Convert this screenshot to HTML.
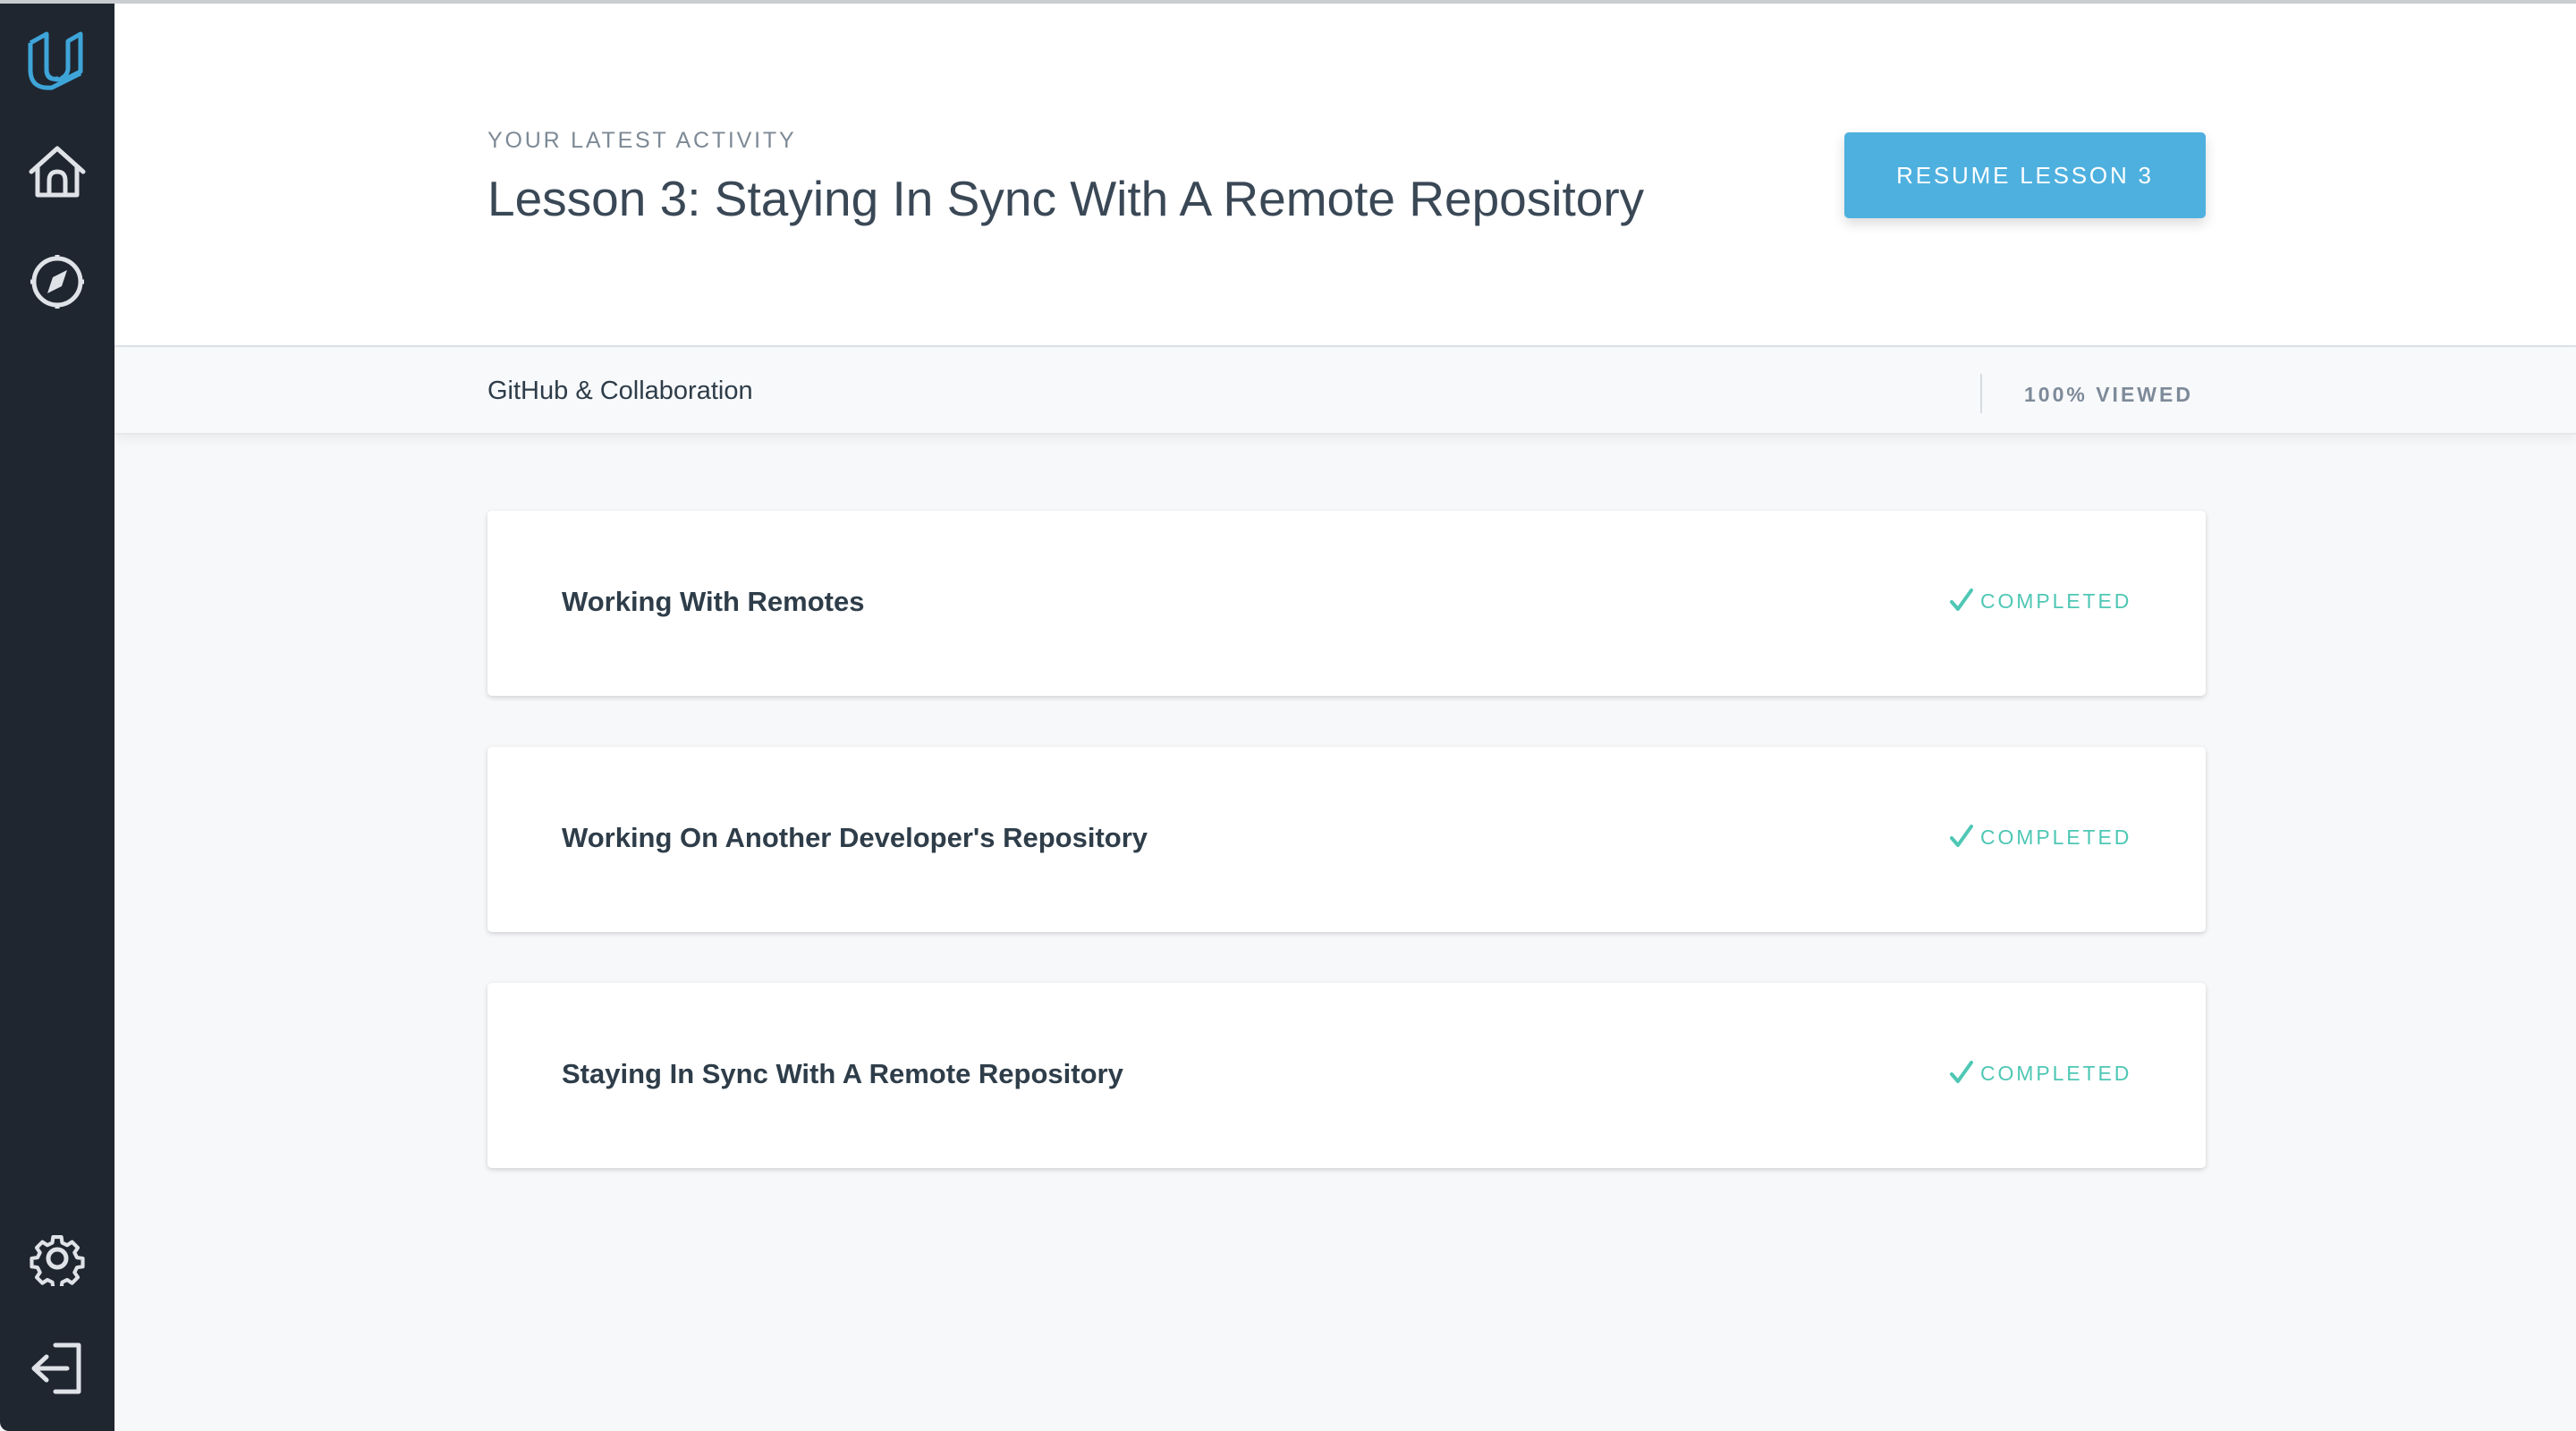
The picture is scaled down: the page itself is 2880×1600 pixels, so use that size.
<!DOCTYPE html>
<html><head><meta charset="utf-8"><style>
*{margin:0;padding:0;box-sizing:border-box}
body{width:2880px;height:1600px;overflow:hidden;background:#f7f8fa;font-family:"Liberation Sans",sans-serif;position:relative}
.top{position:absolute;left:0;top:0;width:2880px;height:4px;background:#c9ccd0;z-index:5}
.side{position:absolute;left:0;top:0;width:128px;height:1600px;background:#1f2630;z-index:4;border-bottom-left-radius:10px}
.side svg{position:absolute;left:0;width:128px}
.header{position:absolute;left:128px;top:0;right:0;height:388px;background:#fff;border-bottom:2px solid #dde3ea}
.sub{position:absolute;left:128px;top:389px;right:0;height:97px;background:#f8f9fb;box-shadow:0 4px 12px rgba(0,0,0,.06);border-bottom:2px solid #e6e8eb}
.kicker{position:absolute;left:545px;top:143px;font-size:25px;letter-spacing:2.8px;color:#7d8a96}
.title{position:absolute;left:545px;top:190px;font-size:55px;font-weight:300;color:#3a4856;letter-spacing:0}
.btn{position:absolute;left:2062px;top:148px;width:404px;height:96px;background:#4eb0df;border-radius:5px;box-shadow:0 6px 14px rgba(0,0,0,.15);color:#fff;font-size:26px;letter-spacing:2.8px;text-align:center;line-height:96px}
.gh{position:absolute;left:545px;top:421px;font-size:29px;color:#2e3d49}
.div{position:absolute;left:2214px;top:418px;width:2px;height:44px;background:#d7dce2}
.viewed{position:absolute;left:2263px;top:428px;font-size:23px;letter-spacing:3px;color:#7d8a99;font-weight:bold}
.card{position:absolute;left:545px;width:1921px;height:207px;background:#fff;border-radius:5px;box-shadow:0 2px 6px rgba(0,0,0,.16)}
.card .t{position:absolute;left:83px;top:84px;font-size:31px;font-weight:bold;color:#2e3d49}
.card .c{position:absolute;left:1669px;top:88px;font-size:23px;letter-spacing:2.9px;color:#4fc7b5}
.card svg{position:absolute;left:1634px;top:86px}
</style></head><body>
<div class="top"></div>
<div class="side">
<svg style="top:30px" height="80" viewBox="0 0 128 80"><path d="M34 18 L52 8 V48 Q52 60 64 58 L62 60 M52 48 Q52 62 74 58 L90 50 V8 L76 16 V46 Q76 54 68 58" fill="none" stroke="#3ea5d9" stroke-width="5" stroke-linejoin="round"/><path d="M34 18 V48 Q34 70 58 68 L90 52" fill="none" stroke="#3ea5d9" stroke-width="5" stroke-linejoin="round"/></svg>
<svg style="top:160px" height="66" viewBox="0 0 128 66"><path d="M35 32 L64 6 L93 32 M42 26 V58 H86 V26 M55 58 V42 Q55 32 64 32 Q73 32 73 42 V58" fill="none" stroke="#dfe3e8" stroke-width="5" stroke-linejoin="round" stroke-linecap="round"/></svg>
<svg style="top:282px" height="66" viewBox="0 0 128 66"><circle cx="64" cy="33" r="26" fill="none" stroke="#dfe3e8" stroke-width="5"/><path d="M64 3V9M64 57V63M34 33H40M88 33H94" stroke="#dfe3e8" stroke-width="5"/><path d="M53 46 L59 28 L75 20 L69 38 Z" fill="#dfe3e8"/></svg>
<svg style="top:1376px" height="62" viewBox="0 0 128 62"><circle cx="64" cy="31" r="10" fill="none" stroke="#dfe3e8" stroke-width="5"/><path d="M59 5h10l1 7 6 3 6-4 7 7-4 6 3 6 7 1v10l-7 1-3 6 4 6-7 7-6-4-6 3-1 7h-10l-1-7-6-3-6 4-7-7 4-6-3-6-7-1v-10l7-1 3-6-4-6 7-7 6 4 6-3z" fill="none" stroke="#dfe3e8" stroke-width="4.5" stroke-linejoin="round" transform="translate(64 31) scale(.92) translate(-64 -31)"/></svg>
<svg style="top:1500px" height="60" viewBox="0 0 128 60"><path d="M62 4 H88 V56 H62 M75 30 H40 M52 17 L38 30 L52 43" fill="none" stroke="#dfe3e8" stroke-width="5" stroke-linecap="round" stroke-linejoin="round"/></svg>
</div>
<div class="header"></div>
<div class="kicker">YOUR LATEST ACTIVITY</div>
<div class="title">Lesson 3: Staying In Sync With A Remote Repository</div>
<div class="btn">RESUME LESSON 3</div>
<div class="sub"></div>
<div class="gh">GitHub &amp; Collaboration</div>
<div class="div"></div>
<div class="viewed">100% VIEWED</div>
<div class="card" style="top:571px"><div class="t">Working With Remotes</div><svg width="28" height="28" viewBox="0 0 28 28"><path d="M3 16 L10 24 L25 3" fill="none" stroke="#4fc7b5" stroke-width="4" stroke-linecap="round" stroke-linejoin="round"/></svg><div class="c">COMPLETED</div></div>
<div class="card" style="top:835px"><div class="t">Working On Another Developer's Repository</div><svg width="28" height="28" viewBox="0 0 28 28"><path d="M3 16 L10 24 L25 3" fill="none" stroke="#4fc7b5" stroke-width="4" stroke-linecap="round" stroke-linejoin="round"/></svg><div class="c">COMPLETED</div></div>
<div class="card" style="top:1099px"><div class="t">Staying In Sync With A Remote Repository</div><svg width="28" height="28" viewBox="0 0 28 28"><path d="M3 16 L10 24 L25 3" fill="none" stroke="#4fc7b5" stroke-width="4" stroke-linecap="round" stroke-linejoin="round"/></svg><div class="c">COMPLETED</div></div>
</body></html>
